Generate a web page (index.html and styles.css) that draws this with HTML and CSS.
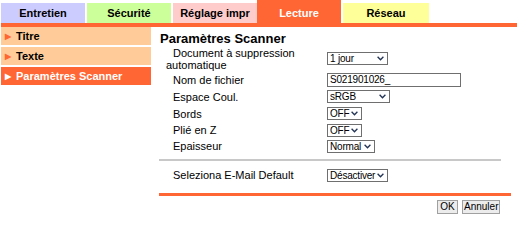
FILE: index.html
```html
<!DOCTYPE html>
<html lang="fr">
<head>
    <meta charset="UTF-8">
    <title>Paramètres Scanner</title>
    <link rel="stylesheet" href="styles.css">
</head>
<body>
    <div class="tabs">
        <div class="tab tab-entretien">Entretien</div>
        <div class="tab tab-securite">Sécurité</div>
        <div class="tab tab-reglage">Réglage impr</div>
        <div class="tab tab-lecture">Lecture</div>
        <div class="tab tab-reseau">Réseau</div>
    </div>
    <div class="page">
        <div class="menu">
            <div class="menu-item"><span class="arrow">&#9654;</span>Titre</div>
            <div class="menu-item"><span class="arrow">&#9654;</span>Texte</div>
            <div class="menu-item active"><span class="arrow">&#9654;</span>Paramètres Scanner</div>
        </div>
        <div class="main">
            <h2>Paramètres Scanner</h2>
            <div class="form form-scan">
                <div class="label wrap">Document à suppression automatique</div>
                <div class="field">
                    <select class="w-jour"><option>1 jour</option></select>
                </div>
                <div class="label">Nom de fichier</div>
                <div class="field">
                    <input type="text" class="w-nom" value="S021901026_">
                </div>
                <div class="label">Espace Coul.</div>
                <div class="field">
                    <select class="w-srgb"><option>sRGB</option></select>
                </div>
                <div class="label">Bords</div>
                <div class="field">
                    <select class="w-off"><option>OFF</option></select>
                </div>
                <div class="label">Plié en Z</div>
                <div class="field">
                    <select class="w-off"><option>OFF</option></select>
                </div>
                <div class="label">Epaisseur</div>
                <div class="field">
                    <select class="w-normal"><option>Normal</option></select>
                </div>
            </div>
            <div class="divider"></div>
            <div class="form form-mail">
                <div class="label">Seleziona E-Mail Default</div>
                <div class="field">
                    <select class="w-desact"><option>Désactiver</option></select>
                </div>
            </div>
            <div class="bottom-line"></div>
            <div class="actions">
                <button class="btn-ok">OK</button>
                <button class="btn-cancel">Annuler</button>
            </div>
        </div>
    </div>
</body>
</html>
```

FILE: styles.css
```css
body {
    margin: 0;
    padding: 0 0 0 1px;
    font-family: "Liberation Sans", Arial, sans-serif;
    font-size: 11px;
    color: #000;
    background: #fff;
}
.tabs {
    display: flex;
    align-items: flex-end;
    height: 23px;
    border-bottom: 4px solid #ff6633;
}
.tab {
    width: 84px;
    height: 20px;
    margin-right: 2px;
    display: flex;
    align-items: center;
    justify-content: center;
    font-weight: bold;
    font-size: 11px;
    padding-bottom: 1px;
    box-sizing: border-box;
}
.tab-entretien { background: #ccccff; }
.tab-securite { background: #ccff99; }
.tab-reglage { background: #ffcccc; margin-right: 0; }
.tab-lecture {
    background: #ff6633;
    color: #fff;
    height: 23px;
    padding-top: 3px;
}
.tab-reseau { background: #ffff99; width: 86px; }
.page {
    display: flex;
}
.menu {
    width: 150px;
    flex-shrink: 0;
}
.menu-item {
    height: 18px;
    margin-bottom: 2px;
    background: #ffcc99;
    display: flex;
    align-items: center;
    font-weight: bold;
    padding-left: 4px;
}
.menu-item.active {
    background: #ff6633;
    color: #fff;
}
.arrow {
    color: #ff6633;
    font-size: 8px;
    margin-right: 5px;
}
.menu-item.active .arrow {
    color: #fff;
}
.main {
    flex: 1;
    padding: 4px 6px 0 8px;
}
h2 {
    font-size: 13px;
    line-height: 15px;
    margin: 0 0 0 1px;
}
.form {
    display: grid;
    grid-template-columns: 161px auto;
    margin-left: 7px;
    align-items: center;
}
.form-scan {
    grid-template-rows: 25px 17px 17px 17px 16px 16px;
}
.form-mail {
    grid-template-rows: 16px;
}
.label {
    padding-left: 7px;
    line-height: 12px;
}
.label.wrap {
    padding-left: 0;
    text-indent: 7px;
}
.field {
    display: flex;
    align-items: center;
}
select, input {
    font-family: "Liberation Sans", Arial, sans-serif;
    font-size: 10px;
    letter-spacing: -0.2px;
    height: 13px;
    line-height: 11px;
    padding: 0 0 0 2px;
    margin: 0;
    border: 1px solid #6f6f6f;
    background-color: #fff;
    color: #000;
    box-sizing: border-box;
    border-radius: 0;
}
select {
    appearance: none;
    -webkit-appearance: none;
    background-image: url("data:image/svg+xml,%3Csvg xmlns='http://www.w3.org/2000/svg' width='7' height='5' viewBox='0 0 7 5'%3E%3Cpolyline points='0.6,0.8 3.5,3.8 6.4,0.8' fill='none' stroke='%23223355' stroke-width='1.3'/%3E%3C/svg%3E");
    background-repeat: no-repeat;
    background-position: right 3px center;
}
input {
    height: 14px;
}
.w-jour { width: 61px; }
.w-nom { width: 134px; }
.w-srgb { width: 63px; }
.w-off { width: 35px; }
.w-normal { width: 48px; }
.w-desact { width: 61px; }
.divider {
    height: 2px;
    background: #c8c8c8;
    margin: 5px 10px 6px 0;
}
.bottom-line {
    height: 3px;
    background: #ff6633;
    margin-top: 10px;
}
.actions {
    display: flex;
    justify-content: flex-end;
    gap: 4px;
    margin: 4px 11px 0 0;
}
button {
    font-family: "Liberation Sans", Arial, sans-serif;
    font-size: 10px;
    height: 14px;
    line-height: 12px;
    padding: 0 1px;
    border: 1px solid #a0a0a0;
    background: #ececec;
    box-sizing: border-box;
}
.btn-ok { width: 21px; }
.btn-cancel { width: 38px; }
```
